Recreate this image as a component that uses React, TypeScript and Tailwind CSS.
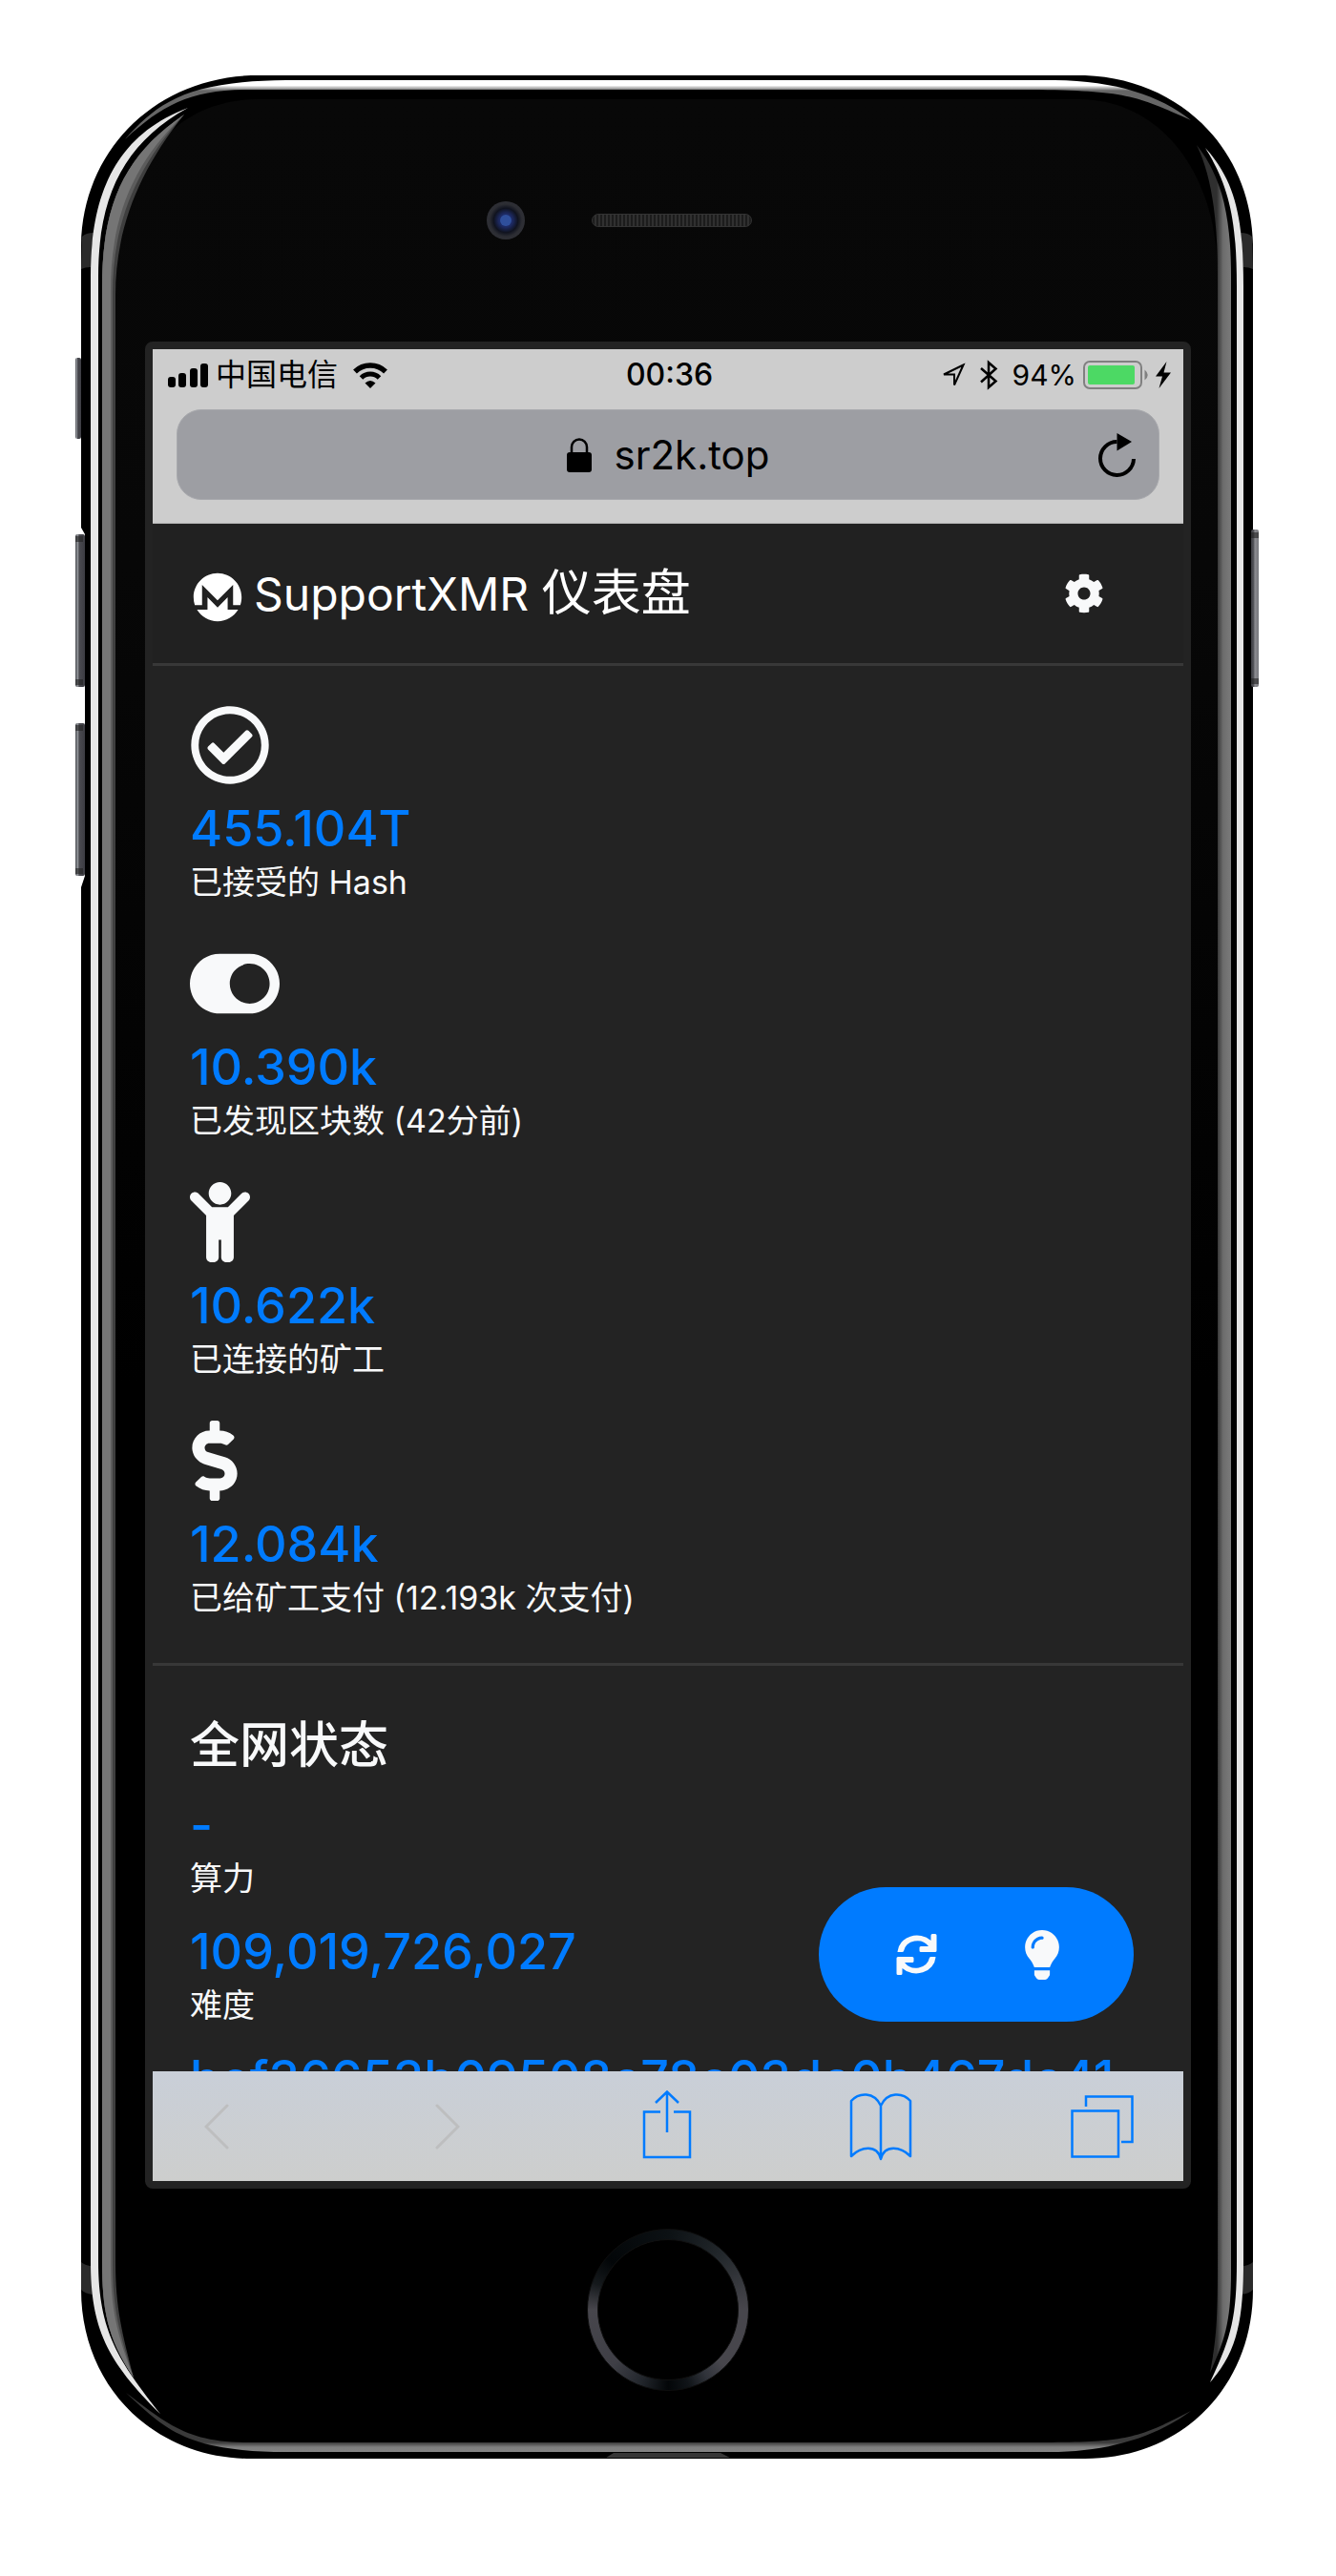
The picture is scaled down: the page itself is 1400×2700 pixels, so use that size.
import type { ReactNode } from "react";
import {
  FaChild,
  FaCog,
  FaDollarSign,
  FaLightbulb,
  FaMonero,
  FaRegCheckCircle,
  FaToggleOn,
} from "react-icons/fa";

const SANS = "font-['Inter','Noto_Sans_CJK_SC',sans-serif]";

function Chassis() {
  return (
    <svg
      className="absolute inset-0 h-full w-full"
      viewBox="0 0 1400 2700"
      preserveAspectRatio="none"
      aria-hidden="true"
    >
      <defs>
        <linearGradient id="face" x1="0" y1="0" x2="0" y2="1">
          <stop offset="0" stopColor="#080808" />
          <stop offset="0.2" stopColor="#070707" />
          <stop offset="0.55" stopColor="#000" />
        </linearGradient>
        <linearGradient id="topShine" gradientUnits="userSpaceOnUse" x1="0" y1="84" x2="0" y2="95">
          <stop offset="0" stopColor="#fff" />
          <stop offset="0.5" stopColor="#fff" />
          <stop offset="1" stopColor="#666" />
        </linearGradient>
        <linearGradient id="bottomShine" gradientUnits="userSpaceOnUse" x1="0" y1="2560" x2="0" y2="2570">
          <stop offset="0" stopColor="#3a3a3a" />
          <stop offset="0.5" stopColor="#808080" />
          <stop offset="1" stopColor="#838383" />
        </linearGradient>
        <linearGradient id="rightShine" gradientUnits="userSpaceOnUse" x1="1275" y1="0" x2="1290" y2="0">
          <stop offset="0" stopColor="#2f2f2f" />
          <stop offset="0.45" stopColor="#6d6d6d" />
          <stop offset="1" stopColor="#7a7a7a" />
        </linearGradient>
        <linearGradient id="key" x1="0" y1="0" x2="1" y2="0">
          <stop offset="0" stopColor="#4b4d52" />
          <stop offset="0.25" stopColor="#8f9297" />
          <stop offset="0.4" stopColor="#4a4a50" />
          <stop offset="1" stopColor="#3c3c42" />
        </linearGradient>
        <linearGradient id="keyRight" x1="1" y1="0" x2="0" y2="0">
          <stop offset="0" stopColor="#77787d" />
          <stop offset="0.5" stopColor="#8d8d92" />
          <stop offset="0.65" stopColor="#55565b" />
          <stop offset="1" stopColor="#3c3c42" />
        </linearGradient>
      </defs>

      <path
        d="M263 79H1137C1240 83 1313 160 1313 260V2400C1313 2500 1240 2577 1137 2577H263C160 2577 85 2500 85 2400V930L89 918V560L85 553V260C85 160 160 83 263 79Z"
        fill="#000"
      />
      <path
        d="M270 104H1130C1215 104 1276 180 1276 290V2400C1276 2480 1215 2556 1130 2556H270C180 2556 121 2480 121 2400V290C121 180 180 104 270 104Z"
        fill="url(#face)"
      />
      <path d="M86 248Q90 244 98 244L95 280Q89 280 85 282Z" fill="#2b2b2b" />
      <path d="M1312 248Q1308 244 1300 244L1303 280Q1309 280 1313 282Z" fill="#2b2b2b" />
      <path d="M85 2371Q90 2375 96 2375L97 2405Q89 2404 85 2400Z" fill="#2b2b2b" />
      <path d="M1313 2371Q1308 2375 1302 2375L1301 2405Q1309 2404 1313 2400Z" fill="#2b2b2b" />

      <path
        d="M131 146C165 108 195 85 300 84H1105C1170 85 1215 100 1248 126C1190 100 1180 95 1080 94H260C200 94 170 110 131 146Z"
        fill="url(#topShine)"
      />
      <path
        d="M132 2508C170 2542 190 2570 300 2570H1100C1160 2570 1210 2555 1248 2527C1190 2557 1180 2560 1080 2560H260C195 2560 175 2540 132 2508Z"
        fill="url(#bottomShine)"
      />
      <path
        d="M197 113C120 142 95 205 95 290V2370C95 2440 112 2475 168 2530C125 2475 103 2445 103 2370V290C103 205 130 150 197 113Z"
        fill="#e6e6e6"
      />
      <path
        d="M193 120C130 163 107 215 107 300V2370C107 2420 112 2450 140 2492C128 2445 121 2420 121 2370V310C121 240 145 180 193 120Z"
        fill="#3f3f3f"
      />
      <path
        d="M193 120C130 163 107 215 107 300V2370C107 2420 112 2450 140 2492C125 2445 118 2420 118 2370V308C118 236 141 177 193 120Z"
        fill="#5c5c5c"
      />
      <path
        d="M193 120C130 163 107 215 107 300V2370C107 2420 112 2450 140 2492C122 2445 116 2420 116 2370V305C116 230 138 172 193 120Z"
        fill="#757575"
      />
      <path
        d="M1263 155C1295 190 1303 230 1303 300V2370C1303 2430 1297 2465 1268 2497C1290 2450 1296 2430 1296 2370V300C1296 230 1288 195 1263 155Z"
        fill="#e6e6e6"
      />
      <path
        d="M1254 152C1280 185 1290 225 1290 290V2380C1290 2430 1285 2450 1268 2487C1275 2450 1276 2430 1276 2370V290C1276 230 1270 185 1254 152Z"
        fill="url(#rightShine)"
      />
      <path d="M635 2576L643 2571H755L765 2576Z" fill="#363636" />

      <rect x="79" y="375" width="6" height="85" rx="2" fill="url(#key)" />
      <rect x="79" y="560" width="10" height="160" rx="2" fill="url(#key)" />
      <rect x="79" y="758" width="10" height="160" rx="2" fill="url(#key)" />
      <rect x="1311" y="555" width="8" height="165" rx="2" fill="url(#keyRight)" />
      <path d="M79 562h8v6h-8zM79 712h8v6h-8zM79 760h8v6h-8zM79 910h8v6h-8zM1311 558h8v6h-8zM1311 711h8v6h-8z" fill="#222" opacity="0.6" />
    </svg>
  );
}

function StatusBar() {
  return (
    <div className="grid h-[54px] grid-cols-[1fr_auto_1fr] items-center pr-[13px] pl-4 text-[32px] leading-10">
      <div className="flex items-center">
        <svg className="h-[27px] w-[42px]" viewBox="0 0 42 27" aria-label="信号">
          <rect x="0" y="15" width="8" height="11" rx="3" />
          <rect x="11" y="11" width="8" height="15" rx="3" />
          <rect x="23" y="6" width="8" height="20" rx="3" />
          <rect x="34" y="1" width="8" height="25" rx="3" />
        </svg>
        <span className="ml-2">中国电信</span>
        <svg className="ml-4 h-[27px] w-9" viewBox="0 0 36 27" fill="none" stroke="#000" aria-label="Wi-Fi">
          <path d="M2 9.500A23 23 0 0 1 34 9.500" strokeWidth="5.500" />
          <path d="M8.500 16A13.500 13.500 0 0 1 27.500 16" strokeWidth="5" />
          <path d="M12.500 21.500Q18 16.500 23.500 21.500L18 27Z" fill="#000" stroke="none" />
        </svg>
      </div>
      <time className="font-medium">00:36</time>
      <div className="flex items-center justify-end">
        <svg className="h-[27px] w-[26px]" viewBox="0 0 26 27" fill="none" stroke="#000" strokeWidth="2" aria-label="定位">
          <path d="M23.500 2.500L3 12.500H14V23.500Z" />
        </svg>
        <svg className="ml-[14px] h-8 w-5" viewBox="0 0 20 32" fill="none" stroke="#000" strokeWidth="2.500" aria-label="蓝牙">
          <path d="M2 9L17.500 22.500L10 29V3L17.500 9.500L2 23.500" />
        </svg>
        <span className="ml-[15px] text-[30px]">94%</span>
        <svg className="ml-[7px] h-[30px] w-[69px]" viewBox="0 0 69 30" aria-label="电池">
          <rect x="1" y="1" width="60" height="28" rx="6" fill="none" stroke="#808080" strokeWidth="2" />
          <rect x="5" y="5" width="49" height="20" rx="2" fill="#4cd964" />
          <path d="M64.500 9.500Q71 15 64.500 20.500Z" fill="#808080" />
        </svg>
        <svg className="ml-[7px] h-7 w-4" viewBox="0 0 16 28" aria-label="充电中">
          <path d="M11.500 0L0 15.500H7L3.500 28L16 11.500H8.500Z" />
        </svg>
      </div>
    </div>
  );
}

function AddressBar() {
  return (
    <div className="mx-[25px] mt-[9px] mb-6 grid h-[95px] grid-cols-[1fr_auto_1fr] items-center rounded-[26px] border border-[#a8a9ad] bg-[#9d9ea3] px-6">
      <span />
      <a href="#top" className="flex items-center gap-6 text-[42px] leading-[54px]">
        <svg className="h-9 w-[26px]" viewBox="0 0 26 36" aria-hidden="true">
          <rect x="0" y="15" width="26" height="21" rx="3" />
          <path d="M5 17V9.500a8 8 0 0 1 16 0V17" fill="none" stroke="#000" strokeWidth="2.500" />
        </svg>
        sr2k.top
      </a>
      <button type="button" aria-label="重新载入" className="justify-self-end">
        <svg className="h-[46px] w-[39px]" viewBox="0 0 39 46" aria-hidden="true">
          <path d="M19.500 9A17.500 17.500 0 1 0 37 27" fill="none" stroke="#000" strokeWidth="4" />
          <path d="M19.500 0L35 9L19.500 18.500Z" />
        </svg>
      </button>
    </div>
  );
}

function Stat({ icon, value, label }: { icon?: ReactNode; value: string; label?: string }) {
  return (
    <div>
      {icon && <div className="mb-[15px] h-[84px]">{icon}</div>}
      <p className="text-[52px] leading-[62px] font-medium whitespace-nowrap text-[#007bff]">{value}</p>
      {label && <p className="text-[34px] leading-[50px]">{label}</p>}
    </div>
  );
}

function Toolbar() {
  return (
    <nav
      aria-label="浏览器工具栏"
      className="relative flex h-[115px] shrink-0 items-center justify-between bg-linear-to-b from-[#c9cfd8] to-[#cdcecd] pr-[52px] pl-[29px] text-[#007bff]"
    >
      <button type="button" aria-label="后退" className="flex w-[76px] justify-center">
        <svg className="h-12 w-[26px]" viewBox="0 0 26 48" fill="none" stroke="#bdbebf" strokeWidth="3" strokeLinecap="round">
          <path d="M24 2L2 24L24 46" />
        </svg>
      </button>
      <button type="button" aria-label="前进" className="flex w-[76px] justify-center">
        <svg className="h-12 w-[26px]" viewBox="0 0 26 48" fill="none" stroke="#bdbebf" strokeWidth="3" strokeLinecap="round">
          <path d="M2 2L24 24L2 46" />
        </svg>
      </button>
      <button type="button" aria-label="共享" className="pb-1">
        <svg className="h-[72px] w-[52px]" viewBox="0 0 52 72" fill="none" stroke="currentColor" strokeWidth="2.500">
          <path d="M19 22.500H2V70H50V22.500H33M26 44V2M14 13L26 1.500L38 13" />
        </svg>
      </button>
      <button type="button" aria-label="书签">
        <svg className="h-[72px] w-[66px]" viewBox="0 0 66 72" fill="none" stroke="currentColor" strokeWidth="2.500" strokeLinejoin="round">
          <path d="M33 14C26 -1 10 0 2 9V67C12 57 29 54 33 70C37 54 54 57 64 67V9C56 0 40 -1 33 14V70" />
        </svg>
      </button>
      <button type="button" aria-label="标签页">
        <svg className="h-[66px] w-[66px]" viewBox="0 0 66 66" fill="none" stroke="currentColor" strokeWidth="2.500">
          <path d="M1.500 16.500H50V64.500H1.500ZM16 12V1.500H64.500V49H53" />
        </svg>
      </button>
    </nav>
  );
}

function FloatingActions() {
  return (
    <div className="absolute right-[52px] bottom-[52px] flex h-[141px] items-center justify-center rounded-full bg-[#007bff] pr-[31px] pl-[37px]">
      <button type="button" aria-label="刷新" className="flex w-[131px] justify-center">
        <svg className="h-[43px] w-[43px]" viewBox="0 0 43 43" fill="#f8f9fa" aria-hidden="true">
          <path d="M1.500 18.500A20.500 18.500 0 0 1 36.500 7V1.500Q36.500 0 38 0H41Q42.500 0 42.500 1.500V17.500Q42.500 19 41 19H26Q24.500 19 24.500 17.500V14.500Q24.500 13 26 13H34A14.500 13.500 0 0 0 8 18Q7.500 19 6.500 19H2Q1.500 19 1.500 18.500Z" />
          <path d="M41.500 24.500A20.500 18.500 0 0 1 6.500 36V41.500Q6.500 43 5 43H2Q.5 43 .5 41.500V25.500Q.5 24 2 24H17Q18.500 24 18.500 25.500V28.500Q18.500 30 17 30H9A14.500 13.500 0 0 0 35 25Q35.500 24 36.500 24H41Q41.500 24 41.500 24.500Z" />
        </svg>
      </button>
      <button type="button" aria-label="提示" className="flex w-[131px] justify-center">
        <FaLightbulb className="h-[52px] w-9 text-[#f8f9fa]" />
      </button>
    </div>
  );
}

function Dashboard() {
  return (
    <div className="relative min-h-0 flex-1 overflow-hidden bg-[#232323] text-[#f8f9fa]">
      <header className="flex h-[149px] items-center justify-between border-b-[3px] border-[#383838] bg-[#212121] pr-[83px] pl-[42px]">
        <h1 className="flex items-center gap-3 text-white">
          <FaMonero className="mt-2 h-[52px] w-[52px]" />
          <span className="text-[52px] leading-[62px]">
            <span className="text-[48px]">SupportXMR </span>
            仪表盘
          </span>
        </h1>
        <button type="button" aria-label="设置">
          <FaCog className="h-[42px] w-[42px]" />
        </button>
      </header>

      <section aria-label="矿池状态" className="flex flex-col gap-[39px] border-b-[3px] border-[#383838] px-[39px] pt-[41px] pb-[43px]">
        <Stat icon={<FaRegCheckCircle className="h-[84px] w-[84px]" />} value="455.104T" label="已接受的 Hash" />
        <Stat icon={<FaToggleOn className="h-[84px] w-[94px]" />} value="10.390k" label="已发现区块数 (42分前)" />
        <Stat icon={<FaChild className="h-[84px] w-[63px]" />} value="10.622k" label="已连接的矿工" />
        <Stat icon={<FaDollarSign className="h-[84px] w-[52px]" />} value="12.084k" label="已给矿工支付 (12.193k 次支付)" />
      </section>

      <section className="flex flex-col gap-[21px] px-[39px] pt-[53px]">
        <h2 className="text-[52px] leading-[62px] font-medium">全网状态</h2>
        <Stat value="-" label="算力" />
        <Stat value="109,019,726,027" label="难度" />
        <Stat value="bef36653b09508c78c03dc0b467dc41" />
      </section>

      <FloatingActions />
    </div>
  );
}

export default function App() {
  return (
    <main id="top" className={`relative mx-auto max-w-[1400px] bg-white px-[152px] pt-[211px] pb-[194px] ${SANS}`}>
      <Chassis />

      <div className="relative grid grid-cols-[1fr_auto_1fr] items-center gap-[70px] pb-[107px] pl-2">
        <span className="flex h-10 w-10 items-center justify-center justify-self-end rounded-full bg-[radial-gradient(circle,#1d2a63_0_25%,#10131f_45%,#2c2d33_60%,#35363c_100%)]">
          <span className="h-3 w-3 rounded-full bg-[#2f4f9c]" />
        </span>
        <span className="h-[14px] w-[168px] rounded-full border border-[#333] bg-[repeating-linear-gradient(90deg,#1c1c1c_0_2px,#303030_2px_4px)]" />
      </div>

      <div className="relative flex aspect-[1096/1936] flex-col rounded-lg border-8 border-[#232323] bg-[#232323]">
        <div className="shrink-0 border-b border-[#b0b0b0] bg-[#cdcdcd] text-black">
          <StatusBar />
          <AddressBar />
        </div>
        <Dashboard />
        <Toolbar />
      </div>

      <div className="relative flex justify-center pt-[42px]">
        <button
          type="button"
          aria-label="主屏幕"
          className="h-[170px] w-[170px] rounded-full border border-[#0e0e0e] bg-[conic-gradient(#0c1114_0deg,#23282c_45deg,#47464c_90deg,#47464c_135deg,#30333a_150deg,#101418_165deg,#030608_180deg,#22262c_200deg,#3f3f46_225deg,#47464c_270deg,#15191c_290deg,#030608_310deg,#0c1114_360deg)] p-[10px]"
        >
          <span className="block h-full w-full rounded-full border border-[#111] bg-black" />
        </button>
      </div>
    </main>
  );
}
